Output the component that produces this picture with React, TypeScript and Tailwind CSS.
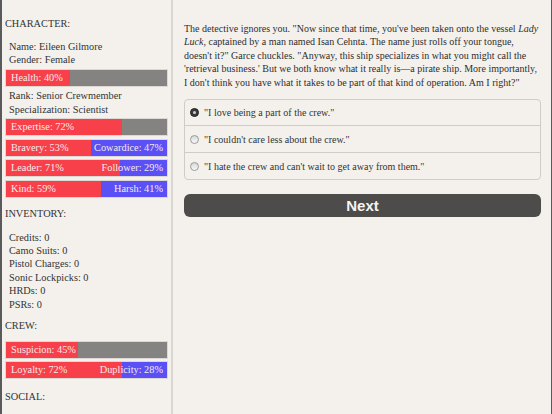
import React from "react";

const serif = { fontFamily: '"Liberation Serif", "DejaVu Serif", serif' };

function Bar({ left, right, pct, rightColor }: { left: string; right?: string; pct: number; rightColor: string }) {
  return (
    <div className="relative h-[18px] mb-[2.5px] border border-[#dcd9d4] flex text-[10.3px] leading-[16px] text-[#f6e9e9]" style={{ background: rightColor }}>
      <div className="h-full bg-[#f7404a]" style={{ width: `${pct}%` }} />
      <div className="absolute inset-0 flex items-center justify-between pl-[5px] pr-[4px]">
        <span>{left}</span>
        {right && <span>{right}</span>}
      </div>
    </div>
  );
}

function Radio({ checked }: { checked?: boolean }) {
  return checked ? (
    <span className="inline-block w-[9px] h-[9px] rounded-full bg-[#3a3a3a] border border-[#222] relative shrink-0">
      <span className="absolute left-[2px] top-[2px] w-[3px] h-[3px] rounded-full bg-[#cfcfcf]" />
    </span>
  ) : (
    <span className="inline-block w-[9px] h-[9px] rounded-full border border-[#9a9a9a] bg-gradient-to-b from-[#d8d8d8] to-[#f8f8f8] shrink-0" />
  );
}

export default function App() {
  const item = "pl-[4px] h-[13.4px] leading-[13.4px] whitespace-nowrap";
  const head = "h-[14px] leading-[14px]";
  return (
    <div className="w-[552px] h-[414px] bg-[#f4f1ec] flex text-[#333] overflow-hidden border-l-2 border-r border-[#5a5a5a]" style={serif}>
      <div className="w-[171px] shrink-0 border-r-2 border-[#dad7d2] px-[3px] pt-[17px] text-[10.3px]">
        <div className={head}>CHARACTER:</div>
        <div className="mt-[9px]">
          <div className={item}>Name: Eileen Gilmore</div>
          <div className={item}>Gender: Female</div>
        </div>
        <div className="mt-[2px]">
          <Bar left="Health: 40%" pct={40} rightColor="#858382" />
        </div>
        <div className={item}>Rank: Senior Crewmember</div>
        <div className={item}>Specialization: Scientist</div>
        <div className="mt-[2px]">
          <Bar left="Expertise: 72%" pct={72} rightColor="#858382" />
          <Bar left="Bravery: 53%" right="Cowardice: 47%" pct={53} rightColor="#5a50f5" />
          <Bar left="Leader: 71%" right="Follower: 29%" pct={71} rightColor="#5a50f5" />
          <Bar left="Kind: 59%" right="Harsh: 41%" pct={59} rightColor="#5a50f5" />
        </div>
        <div className={`${head} mt-[9px]`}>INVENTORY:</div>
        <div className="mt-[10px]">
          <div className={item}>Credits: 0</div>
          <div className={item}>Camo Suits: 0</div>
          <div className={item}>Pistol Charges: 0</div>
          <div className={item}>Sonic Lockpicks: 0</div>
          <div className={item}>HRDs: 0</div>
          <div className={item}>PSRs: 0</div>
        </div>
        <div className={`${head} mt-[8px]`}>CREW:</div>
        <div className="mt-[8px]">
          <Bar left="Suspicion: 45%" pct={45} rightColor="#858382" />
          <Bar left="Loyalty: 72%" right="Duplicity: 28%" pct={72} rightColor="#5a50f5" />
        </div>
        <div className={`${head} mt-[11px]`}>SOCIAL:</div>
      </div>
      <div className="flex-1 pl-[11px] pr-[10px] pt-[22px]">
        <p className="text-[10px] leading-[13.4px] text-[#2e2e2e] whitespace-nowrap">
          The detective ignores you. "Now since that time, you've been taken onto the vessel <i>Lady<br />Luck</i>, captained by a man named Isan Cehnta. The name just rolls off your tongue,<br />doesn't it?" Garce chuckles. "Anyway, this ship specializes in what you might call the<br />'retrieval business.' But we both know what it really is—a pirate ship. More importantly,<br />I don't think you have what it takes to be part of that kind of operation. Am I right?"
        </p>
        <div className="mt-[10px] border border-[#cfccc7] rounded-[4px] text-[10px]">
          <div className="h-[26px] flex items-center gap-[5px] pl-[5px] border-b border-[#cfccc7]">
            <Radio checked />
            <span>"I love being a part of the crew."</span>
          </div>
          <div className="h-[27px] flex items-center gap-[5px] pl-[5px] border-b border-[#cfccc7]">
            <Radio />
            <span>"I couldn't care less about the crew."</span>
          </div>
          <div className="h-[26px] flex items-center gap-[5px] pl-[5px]">
            <Radio />
            <span>"I hate the crew and can't wait to get away from them."</span>
          </div>
        </div>
        <button className="mt-[14px] w-full h-[23px] rounded-[6px] bg-[#4d4c4a] text-[#f4f4f4] text-[15px] font-bold leading-[23px]" style={{ fontFamily: '"Liberation Sans", Arial, sans-serif' }}>
          Next
        </button>
      </div>
    </div>
  );
}
